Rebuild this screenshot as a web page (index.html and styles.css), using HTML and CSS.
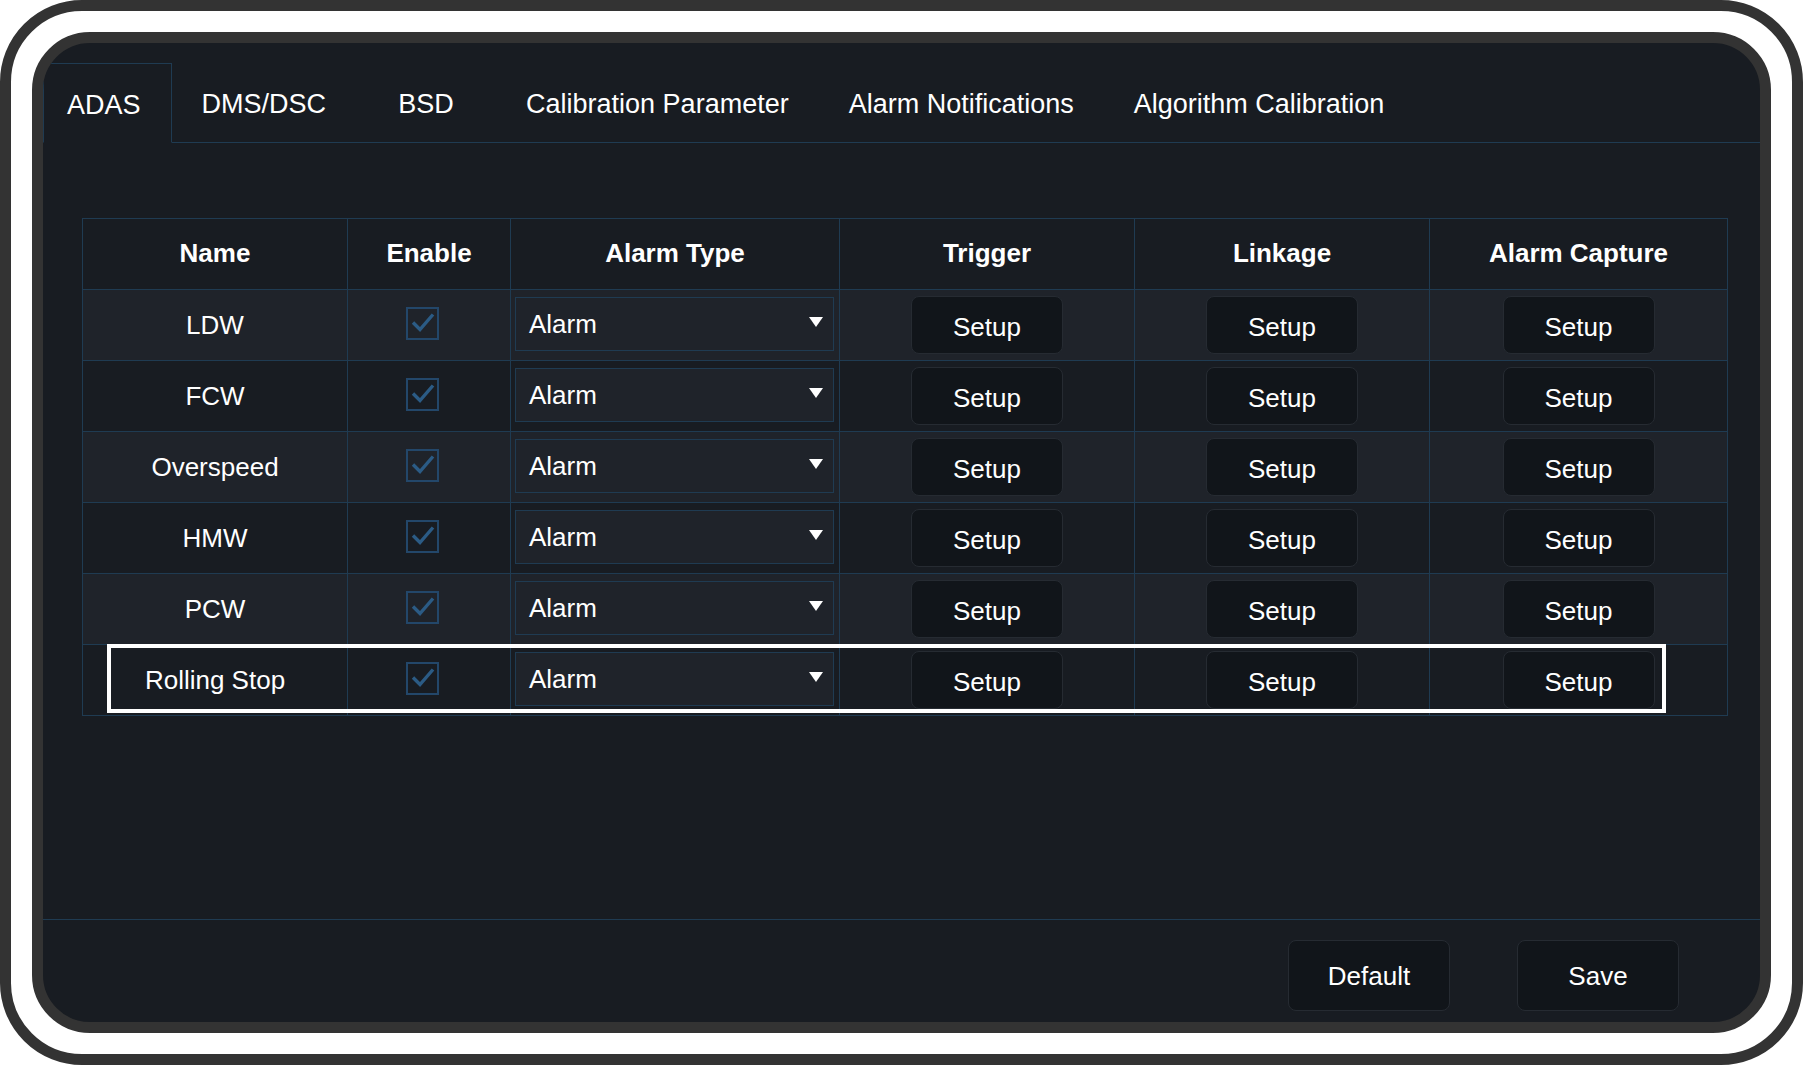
FILE: index.html
```html
<!DOCTYPE html>
<html lang="en">
<head>
<meta charset="utf-8">
<title>ADAS</title>
<link rel="stylesheet" href="styles.css">
</head>
<body>
<div class="frame">
  <div class="panel">
    <nav class="tabs">
      <div class="tab active">ADAS</div>
      <div class="tab">DMS/DSC</div>
      <div class="tab">BSD</div>
      <div class="tab">Calibration Parameter</div>
      <div class="tab">Alarm Notifications</div>
      <div class="tab">Algorithm Calibration</div>
      <div class="tab-fill"></div>
    </nav>
    <main class="main">
      <div class="table">
        <div class="row head">
          <div class="cell">Name</div>
          <div class="cell">Enable</div>
          <div class="cell">Alarm Type</div>
          <div class="cell">Trigger</div>
          <div class="cell">Linkage</div>
          <div class="cell">Alarm Capture</div>
        </div>
        <div class="row odd">
          <div class="cell">LDW</div>
          <div class="cell check-cell"><span class="check"><svg viewBox="0 0 29 29" width="29" height="29"><path d="M5 13.5 L12 20.5 L25 5.5" fill="none" stroke="#2b5b85" stroke-width="3.4"/></svg></span></div>
          <div class="cell select-cell"><div class="select"><span>Alarm</span><i class="arrow"></i></div></div>
          <div class="cell"><button class="btn">Setup</button></div>
          <div class="cell"><button class="btn">Setup</button></div>
          <div class="cell"><button class="btn">Setup</button></div>
        </div>
        <div class="row">
          <div class="cell">FCW</div>
          <div class="cell check-cell"><span class="check"><svg viewBox="0 0 29 29" width="29" height="29"><path d="M5 13.5 L12 20.5 L25 5.5" fill="none" stroke="#2b5b85" stroke-width="3.4"/></svg></span></div>
          <div class="cell select-cell"><div class="select"><span>Alarm</span><i class="arrow"></i></div></div>
          <div class="cell"><button class="btn">Setup</button></div>
          <div class="cell"><button class="btn">Setup</button></div>
          <div class="cell"><button class="btn">Setup</button></div>
        </div>
        <div class="row odd">
          <div class="cell">Overspeed</div>
          <div class="cell check-cell"><span class="check"><svg viewBox="0 0 29 29" width="29" height="29"><path d="M5 13.5 L12 20.5 L25 5.5" fill="none" stroke="#2b5b85" stroke-width="3.4"/></svg></span></div>
          <div class="cell select-cell"><div class="select"><span>Alarm</span><i class="arrow"></i></div></div>
          <div class="cell"><button class="btn">Setup</button></div>
          <div class="cell"><button class="btn">Setup</button></div>
          <div class="cell"><button class="btn">Setup</button></div>
        </div>
        <div class="row">
          <div class="cell">HMW</div>
          <div class="cell check-cell"><span class="check"><svg viewBox="0 0 29 29" width="29" height="29"><path d="M5 13.5 L12 20.5 L25 5.5" fill="none" stroke="#2b5b85" stroke-width="3.4"/></svg></span></div>
          <div class="cell select-cell"><div class="select"><span>Alarm</span><i class="arrow"></i></div></div>
          <div class="cell"><button class="btn">Setup</button></div>
          <div class="cell"><button class="btn">Setup</button></div>
          <div class="cell"><button class="btn">Setup</button></div>
        </div>
        <div class="row odd">
          <div class="cell">PCW</div>
          <div class="cell check-cell"><span class="check"><svg viewBox="0 0 29 29" width="29" height="29"><path d="M5 13.5 L12 20.5 L25 5.5" fill="none" stroke="#2b5b85" stroke-width="3.4"/></svg></span></div>
          <div class="cell select-cell"><div class="select"><span>Alarm</span><i class="arrow"></i></div></div>
          <div class="cell"><button class="btn">Setup</button></div>
          <div class="cell"><button class="btn">Setup</button></div>
          <div class="cell"><button class="btn">Setup</button></div>
        </div>
        <div class="row">
          <div class="cell">Rolling Stop</div>
          <div class="cell check-cell"><span class="check"><svg viewBox="0 0 29 29" width="29" height="29"><path d="M5 13.5 L12 20.5 L25 5.5" fill="none" stroke="#2b5b85" stroke-width="3.4"/></svg></span></div>
          <div class="cell select-cell"><div class="select"><span>Alarm</span><i class="arrow"></i></div></div>
          <div class="cell"><button class="btn">Setup</button></div>
          <div class="cell"><button class="btn">Setup</button></div>
          <div class="cell"><button class="btn">Setup</button></div>
        </div>
        <div class="highlight"></div>
      </div>
    </main>
    <footer class="footer">
      <button class="btn big">Default</button>
      <button class="btn big">Save</button>
    </footer>
  </div>
</div>
</body>
</html>
```

FILE: styles.css
```css
html, body {
  margin: 0;
  padding: 0;
  background: #ffffff;
}

body {
  width: 1803px;
  height: 1065px;
  font-family: "Liberation Sans", Arial, sans-serif;
  color: #ffffff;
}

.frame {
  box-sizing: border-box;
  width: 1803px;
  height: 1065px;
  border: 11px solid #333333;
  border-radius: 82px;
  padding: 21px;
  background: #ffffff;
}

.panel {
  box-sizing: border-box;
  height: 100%;
  border: 11px solid #333333;
  border-radius: 58px;
  background: #181c22;
  overflow: hidden;
  display: flex;
  flex-direction: column;
}

/* Tabs */
.tabs {
  display: flex;
  margin-top: 20px;
  height: 80px;
}

.tab {
  box-sizing: border-box;
  min-width: 140px;
  padding: 4px 30px 0;
  display: flex;
  align-items: center;
  justify-content: center;
  font-size: 27px;
  white-space: nowrap;
  border-bottom: 1px solid #1f3b52;
}

.tab.active {
  min-width: 0;
  padding: 4px 30px 0 23px;
  border: 1px solid #1f3b52;
  border-bottom-color: transparent;
}

.tab-fill {
  flex: 1;
  border-bottom: 1px solid #1f3b52;
}

/* Main table area */
.main {
  flex: 1;
  padding: 75px 0 0 39px;
}

.table {
  position: relative;
  width: 1646px;
  box-sizing: border-box;
  border-top: 1px solid #1f3b52;
  border-left: 1px solid #1f3b52;
}

.row {
  display: grid;
  grid-template-columns: 265px 163px 329px 295px 295px 298px;
  height: 71px;
}

.row.odd {
  background: #1f232a;
}

.cell {
  box-sizing: border-box;
  border-right: 1px solid #1f3b52;
  border-bottom: 1px solid #1f3b52;
  display: flex;
  align-items: center;
  justify-content: center;
  font-size: 26px;
  white-space: nowrap;
}

.row.head .cell {
  font-weight: bold;
  padding-bottom: 2px;
}

.check-cell {
  padding-right: 14px;
  padding-bottom: 4px;
}

.check {
  box-sizing: border-box;
  width: 33px;
  height: 33px;
  border: 2px solid #23476a;
  display: flex;
}

.select-cell {
  justify-content: flex-start;
  padding: 0 5px 0 4px;
}

.select {
  box-sizing: border-box;
  width: 320px;
  height: 54px;
  border: 1px solid #1f3b52;
  background: #1f232a;
  display: flex;
  align-items: center;
  justify-content: space-between;
  padding: 0 10px 0 13px;
  margin-bottom: 2px;
}

.arrow {
  width: 0;
  height: 0;
  border-left: 7px solid transparent;
  border-right: 7px solid transparent;
  border-top: 10px solid #ffffff;
  margin-bottom: 4px;
}

.btn {
  box-sizing: border-box;
  width: 152px;
  height: 58px;
  border: 1px solid #262b32;
  border-radius: 8px;
  background: #11151a;
  color: #ffffff;
  font-family: "Liberation Sans", Arial, sans-serif;
  font-size: 26px;
  padding: 4px 0 0 0;
  margin: 0;
}

.highlight {
  position: absolute;
  left: 24px;
  top: 425px;
  width: 1559px;
  height: 69px;
  box-sizing: border-box;
  border: 4px solid #ffffff;
  pointer-events: none;
}

/* Footer */
.footer {
  height: 103px;
  box-sizing: border-box;
  border-top: 1px solid #1f3b52;
  display: flex;
  justify-content: flex-end;
  align-items: flex-start;
  gap: 67px;
  padding: 20px 81px 0 0;
}

.btn.big {
  width: 162px;
  height: 71px;
  padding-top: 2px;
}
```
